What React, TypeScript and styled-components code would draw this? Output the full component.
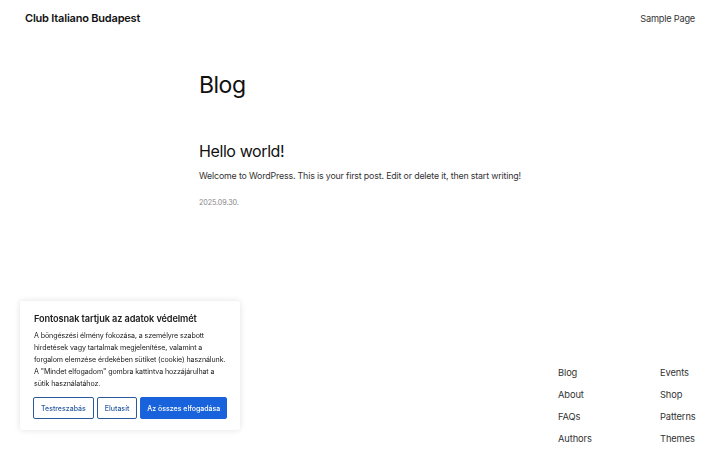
import React from 'react'
import styled, { createGlobalStyle } from 'styled-components'

const GlobalStyle = createGlobalStyle`
  html, body {
    margin: 0;
    padding: 0;
    background: #fff;
  }
  body {
    font-family: Inter, 'Noto Sans', 'Liberation Sans', sans-serif;
    color: #111;
  }
  * {
    box-sizing: border-box;
  }
`

const footerLinks = [
  ['Blog', 'Events'],
  ['About', 'Shop'],
  ['FAQs', 'Patterns'],
  ['Authors', 'Themes']
]

export default function App() {
  return (
    <>
      <GlobalStyle />
      <Page>
        <Header>
          <SiteTitle>Club Italiano Budapest</SiteTitle>
          <NavLink>Sample Page</NavLink>
        </Header>
        <Main>
          <PageTitle>Blog</PageTitle>
          <Post>
            <PostTitle>Hello world!</PostTitle>
            <Excerpt>
              Welcome to WordPress. This is your first post. Edit or delete it,
              then start writing!
            </Excerpt>
            <PostDate>2025.09.30.</PostDate>
          </Post>
        </Main>
        <Footer>
          <FooterNav>
            {footerLinks.flat().map(label => (
              <FooterLink key={label}>{label}</FooterLink>
            ))}
          </FooterNav>
        </Footer>
      </Page>
      <CookieBanner>
        <CookieTitle>Fontosnak tartjuk az adatok védelmét</CookieTitle>
        <CookieText>
          A böngészési élmény fokozása, a személyre szabott hirdetések vagy
          tartalmak megjelenítése, valamint a forgalom elemzése érdekében
          sütiket (cookie) használunk. A "Mindet elfogadom" gombra kattintva
          hozzájárulhat a sütik használatához.
        </CookieText>
        <ButtonRow>
          <CookieButton>Testreszabás</CookieButton>
          <CookieButton>Elutasít</CookieButton>
          <CookieButton primary>Az összes elfogadása</CookieButton>
        </ButtonRow>
      </CookieBanner>
    </>
  )
}

const Page = styled.div`
  min-height: 450px;
  display: flex;
  flex-direction: column;
`

const Header = styled.header`
  display: flex;
  justify-content: space-between;
  align-items: center;
  padding: 2px 25px 0 25px;
  height: 34px;
`

const SiteTitle = styled.div`
  font-size: 11px;
  font-weight: 600;
  letter-spacing: -0.2px;
  color: #111;
`

const NavLink = styled.a`
  font-size: 9.2px;
  color: #333;
  letter-spacing: -0.2px;
`

const Main = styled.main`
  width: 322px;
  margin-left: 199px;
  padding-top: 36px;
`

const PageTitle = styled.h1`
  margin: 0;
  font-size: 23px;
  font-weight: 400;
  letter-spacing: -0.5px;
  line-height: 30px;
  color: #111;
`

const Post = styled.article`
  margin-top: 40px;
`

const PostTitle = styled.h2`
  margin: 0;
  font-size: 16px;
  font-weight: 400;
  letter-spacing: -0.4px;
  line-height: 22px;
  color: #111;
`

const Excerpt = styled.p`
  margin: 7px 0 0 0;
  font-size: 8.8px;
  line-height: 14px;
  letter-spacing: -0.15px;
  color: #333;
  white-space: nowrap;
`

const PostDate = styled.div`
  margin-top: 15px;
  font-size: 7.2px;
  color: #888;
  letter-spacing: -0.1px;
`

const Footer = styled.footer`
  margin-top: auto;
  display: flex;
  justify-content: flex-end;
  padding: 0 25px 4px 0;
`

const FooterNav = styled.nav`
  display: grid;
  grid-template-columns: 102px auto;
  row-gap: 8px;
  width: 137px;
`

const FooterLink = styled.a`
  font-size: 9.3px;
  line-height: 14px;
  color: #333;
  letter-spacing: -0.1px;
`

const CookieBanner = styled.div`
  position: fixed;
  left: 20px;
  bottom: 20px;
  width: 220px;
  padding: 11px 13px 11px 14px;
  background: #fff;
  border-radius: 3px;
  box-shadow: 0 0 6px rgba(0, 0, 0, 0.12);
`

const CookieTitle = styled.div`
  font-size: 9.2px;
  font-weight: 600;
  color: #212121;
  letter-spacing: -0.1px;
  line-height: 13px;
`

const CookieText = styled.p`
  margin: 5px 0 0 0;
  font-size: 7.1px;
  line-height: 12px;
  color: #212121;
  letter-spacing: -0.1px;
`

const ButtonRow = styled.div`
  display: flex;
  gap: 3px;
  margin-top: 7px;
  margin-left: -1px;
`

const CookieButton = styled.button<{ primary?: boolean }>`
  height: 22px;
  padding: 0 ${p => (p.primary ? '6px' : '7px')};
  white-space: nowrap;
  font-family: inherit;
  font-size: 7px;
  font-weight: 500;
  border-radius: 2px;
  border: 1.5px solid ${p => (p.primary ? '#1863dc' : '#2a5a9e')};
  background: ${p => (p.primary ? '#1863dc' : '#fff')};
  color: ${p => (p.primary ? '#fff' : '#2a5a9e')};
  cursor: pointer;
`
